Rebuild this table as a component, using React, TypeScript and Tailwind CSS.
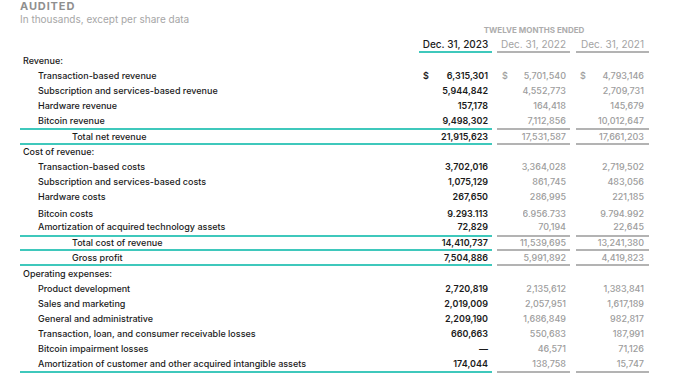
import React from 'react';

type Row = {
    label: string;
    kind: 'section' | 'item' | 'total';
    values?: [string, string, string];
    dollar?: boolean;
    border?: boolean;
    h: string;
    clip?: boolean;
};

const rows: Row[] = [
    { label: 'Revenue:', kind: 'section', h: 'h-[15px]' },
    { label: 'Transaction-based revenue', kind: 'item', values: ['6,315,301', '5,701,540', '4,793,146'], dollar: true, h: 'h-[15px]' },
    { label: 'Subscription and services-based revenue', kind: 'item', values: ['5,944,842', '4,552,773', '2,709,731'], h: 'h-[15px]' },
    { label: 'Hardware revenue', kind: 'item', values: ['157,178', '164,418', '145,679'], h: 'h-[15px]' },
    { label: 'Bitcoin revenue', kind: 'item', values: ['9,498,302', '7,112,856', '10,012,647'], border: true, h: 'h-[17px]' },
    { label: 'Total net revenue', kind: 'total', values: ['21,915,623', '17,531,587', '17,661,203'], border: true, h: 'h-[15px]' },
    { label: 'Cost of revenue:', kind: 'section', h: 'h-[14px]' },
    { label: 'Transaction-based costs', kind: 'item', values: ['3,702,016', '3,364,028', '2,719,502'], h: 'h-[15px]' },
    { label: 'Subscription and services-based costs', kind: 'item', values: ['1,075,129', '861,745', '483,056'], h: 'h-[15px]' },
    { label: 'Hardware costs', kind: 'item', values: ['267,650', '286,995', '221,185'], h: 'h-[15px]' },
    { label: 'Bitcoin costs', kind: 'item', values: ['9,293,113', '6,956,733', '9,794,992'], h: 'h-[15px]', clip: true },
    { label: 'Amortization of acquired technology assets', kind: 'item', values: ['72,829', '70,194', '22,645'], border: true, h: 'h-[18px]' },
    { label: 'Total cost of revenue', kind: 'total', values: ['14,410,737', '11,539,695', '13,241,380'], border: true, h: 'h-[14px]' },
    { label: 'Gross profit', kind: 'total', values: ['7,504,886', '5,991,892', '4,419,823'], border: true, h: 'h-[15px]' },
    { label: 'Operating expenses:', kind: 'section', h: 'h-[15px]' },
    { label: 'Product development', kind: 'item', values: ['2,720,819', '2,135,612', '1,383,841'], h: 'h-[15px]' },
    { label: 'Sales and marketing', kind: 'item', values: ['2,019,009', '2,057,951', '1,617,189'], h: 'h-[15px]' },
    { label: 'General and administrative', kind: 'item', values: ['2,209,190', '1,686,849', '982,817'], h: 'h-[15px]' },
    { label: 'Transaction, loan, and consumer receivable losses', kind: 'item', values: ['660,663', '550,683', '187,991'], h: 'h-[15px]' },
    { label: 'Bitcoin impairment losses', kind: 'item', values: ['—', '46,571', '71,126'], h: 'h-[16px]' },
    { label: 'Amortization of customer and other acquired intangible assets', kind: 'item', values: ['174,044', '138,758', '15,747'], border: true, h: 'h-[16px]' },
];

// the Bitcoin costs row is cut off at its lower edge in the source
function Cell({ text, clip }: { text: React.ReactNode; clip?: boolean }) {
    if (clip) {
        return (
            <div className="h-[10px] overflow-hidden">
                <div className="leading-[15px] -mt-[1px]">{text}</div>
            </div>
        );
    }
    return <>{text}</>;
}

export default function App() {
    return (
        <div className="w-[681px] h-[373px] overflow-hidden bg-white font-['Inter',sans-serif] text-[#1b1b1b]">
            <div className="pl-[20px]">
                <div className="h-[13px] leading-[13px] text-[11px] font-bold tracking-[0.08em] text-[#8f8f8f]">AUDITED</div>
                <div className="h-[12px] leading-[12px] text-[10px] text-[#a6a6a6]">In thousands, except per share data</div>
            </div>

            <div className="flex pl-[20px] mt-[1px]">
                <div className="w-[399px]" />
                <div className="w-[230px] h-[8px] leading-[8px] text-center text-[8px] font-bold text-[#adadad]">
                    TWELVE MONTHS ENDED
                </div>
            </div>

            <div className="flex pl-[20px] mt-[4px] text-[10px]">
                <div className="w-[399px]" />
                <div className="w-[73px] h-[15px] leading-[13px] text-center font-medium border-b-2 border-[#3fc8bc]">Dec. 31, 2023</div>
                <div className="w-[73px] ml-[5px] h-[15px] leading-[13px] text-center text-[#a3a3a3] border-b-2 border-[#b3b3b3]">Dec. 31, 2022</div>
                <div className="w-[73px] ml-[6px] h-[15px] leading-[13px] text-center text-[#a3a3a3] border-b-2 border-[#b3b3b3]">Dec. 31, 2021</div>
            </div>

            <div className="pl-[20px] text-[9px]">
                {rows.map((row, i) => {
                    const pad = row.kind === 'section' ? 'pl-[3px]' : row.kind === 'item' ? 'pl-[18px]' : 'pl-[52px]';
                    const border = row.border ? 'border-b-2' : '';
                    return (
                        <div key={i} className={`flex ${row.h}`}>
                            <div className={`flex w-[472px] items-center ${border} border-[#3fc8bc]`}>
                                <div className={`flex-1 font-medium ${pad}`}>
                                    <Cell text={row.label} clip={row.clip} />
                                </div>
                                <div className="w-[73px] flex justify-between pl-[4px] pr-[4px] font-semibold">
                                    <span>{row.dollar ? '$' : ''}</span>
                                    {row.values && <Cell text={row.values[0]} clip={row.clip} />}
                                </div>
                            </div>
                            <div className={`w-[73px] ml-[5px] flex items-center justify-between pl-[5px] pr-[4px] font-medium text-[#9d9d9d] ${border} border-[#b3b3b3]`}>
                                <span>{row.dollar ? '$' : ''}</span>
                                {row.values && <Cell text={row.values[1]} clip={row.clip} />}
                            </div>
                            <div className={`w-[73px] ml-[6px] flex items-center justify-between pl-[4px] pr-[5px] font-medium text-[#9d9d9d] ${border} border-[#b3b3b3]`}>
                                <span>{row.dollar ? '$' : ''}</span>
                                {row.values && <Cell text={row.values[2]} clip={row.clip} />}
                            </div>
                        </div>
                    );
                })}
            </div>
        </div>
    );
}
